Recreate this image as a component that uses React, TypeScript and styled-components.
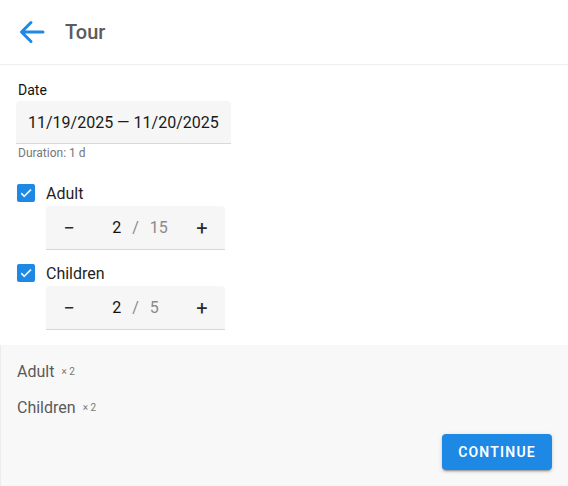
import * as React from 'react';
import styled, { createGlobalStyle } from 'styled-components';

const GlobalStyle = createGlobalStyle`
  html, body {
    margin: 0;
    padding: 0;
    background: #fff;
    font-family: Roboto, "Liberation Sans", sans-serif;
  }
`;

const Page = styled.div`
  width: 568px;
  height: 486px;
  display: flex;
  flex-direction: column;
  overflow: hidden;
`;

const Header = styled.header`
  height: 64px;
  flex: none;
  display: flex;
  align-items: center;
  gap: 19px;
  padding-left: 18px;
  border-bottom: 1px solid #eeeeee;
`;

const BackButton = styled.button`
  width: 28px;
  height: 28px;
  padding: 0;
  border: 0;
  background: none;
  display: flex;
  align-items: center;
  justify-content: center;
  color: #1e88e5;
  cursor: pointer;
`;

const Title = styled.h1`
  margin: 0;
  font-size: 20px;
  font-weight: 500;
  color: #5c5c5c;
`;

const Content = styled.main`
  flex: 1;
  padding: 15px 16px 0 16px;
  display: flex;
  flex-direction: column;
  align-items: flex-start;
`;

const FieldLabel = styled.label`
  font-size: 14px;
  line-height: 20px;
  font-weight: 400;
  color: #111;
  padding-left: 2px;
`;

const DateField = styled.div`
  margin-top: 1px;
  height: 43px;
  width: 215px;
  box-sizing: border-box;
  padding: 0 12px;
  display: flex;
  align-items: center;
  background: #f6f6f6;
  border-bottom: 1px solid #d8d8d8;
  border-radius: 4px 4px 0 0;
  font-size: 16px;
  color: #1a1a1a;
  white-space: nowrap;
`;

const Hint = styled.div`
  margin-top: 1px;
  padding-left: 2px;
  font-size: 12px;
  line-height: 16px;
  color: #777;
`;

const Group = styled.div<{ $first?: boolean }>`
  margin-top: ${(p) => (p.$first ? '20px' : '11px')};
  display: flex;
  flex-direction: column;
  align-items: flex-start;
`;

const CheckRow = styled.label`
  height: 24px;
  display: flex;
  align-items: center;
  gap: 11px;
  padding-left: 1px;
  font-size: 16px;
  color: #1f1f1f;
`;

const Box = styled.span`
  width: 18px;
  height: 18px;
  border-radius: 2px;
  background: #1e88e5;
  display: flex;
  align-items: center;
  justify-content: center;
`;

const Stepper = styled.div`
  margin: 1px 0 0 30px;
  width: 179px;
  height: 44px;
  box-sizing: border-box;
  display: grid;
  grid-template-columns: 46px 1fr 46px;
  align-items: center;
  background: #f6f6f6;
  border-bottom: 1px solid #d8d8d8;
  border-radius: 4px 4px 0 0;
`;

const StepButton = styled.button`
  height: 100%;
  border: 0;
  background: none;
  padding: 0;
  font-family: inherit;
  font-size: 20px;
  color: #2a2a2a;
  display: flex;
  align-items: center;
  justify-content: center;
`;

const Counter = styled.div`
  display: grid;
  grid-template-columns: 1fr auto 1fr;
  column-gap: 11px;
  align-items: center;
  font-size: 16px;
`;

const Value = styled.span`
  text-align: right;
  color: #111;
`;

const Slash = styled.span`
  color: #8a8a8a;
`;

const Max = styled.span`
  color: #8a8a8a;
`;

const Summary = styled.section`
  flex: none;
  height: 141px;
  box-sizing: border-box;
  background: #f8f8f8;
  border-left: 1px solid #ececec;
  padding: 8px 16px 0 16px;
  display: flex;
  flex-direction: column;
`;

const SummaryLine = styled.div`
  height: 36px;
  display: flex;
  align-items: center;
  gap: 7px;
  font-size: 16px;
  color: #5a5a5a;
`;

const Times = styled.span`
  font-size: 10px;
  color: #777;
`;

const Footer = styled.div`
  margin-top: 9px;
  display: flex;
  justify-content: flex-end;
`;

const ContinueButton = styled.button`
  width: 110px;
  height: 36px;
  border: 0;
  border-radius: 4px;
  background: #1e88e5;
  color: #fff;
  font-family: inherit;
  font-size: 14px;
  font-weight: 600;
  letter-spacing: 1.2px;
  box-shadow: 0 3px 1px -2px rgba(0, 0, 0, 0.2), 0 2px 2px 0 rgba(0, 0, 0, 0.14),
    0 1px 5px 0 rgba(0, 0, 0, 0.12);
`;

const BackArrow = () => (
  <svg width="28" height="28" viewBox="0 0 28 28" fill="none">
    <path
      d="M25 14H4.5M13 4.5L3.5 14l9.5 9.5"
      stroke="currentColor"
      strokeWidth="3"
      strokeLinecap="round"
      strokeLinejoin="round"
    />
  </svg>
);

const Check = () => (
  <svg width="14" height="14" viewBox="0 0 24 24">
    <path d="M9 16.2L4.8 12l-1.4 1.4L9 19 21 7l-1.4-1.4L9 16.2z" fill="#fff" stroke="#fff" strokeWidth="1" />
  </svg>
);

type Ticket = { name: string; count: number; max: number };

const tickets: Ticket[] = [
  { name: 'Adult', count: 2, max: 15 },
  { name: 'Children', count: 2, max: 5 },
];

export default function App() {
  return (
    <Page>
      <GlobalStyle />
      <Header>
        <BackButton aria-label="Back">
          <BackArrow />
        </BackButton>
        <Title>Tour</Title>
      </Header>
      <Content>
        <FieldLabel>Date</FieldLabel>
        <DateField>11/19/2025 — 11/20/2025</DateField>
        <Hint>Duration: 1 d</Hint>
        {tickets.map((t, i) => (
          <Group key={t.name} $first={i === 0}>
            <CheckRow>
              <Box>
                <Check />
              </Box>
              {t.name}
            </CheckRow>
            <Stepper>
              <StepButton>−</StepButton>
              <Counter>
                <Value>{t.count}</Value>
                <Slash>/</Slash>
                <Max>{t.max}</Max>
              </Counter>
              <StepButton>+</StepButton>
            </Stepper>
          </Group>
        ))}
      </Content>
      <Summary>
        {tickets.map((t) => (
          <SummaryLine key={t.name}>
            {t.name}
            <Times>× {t.count}</Times>
          </SummaryLine>
        ))}
        <Footer>
          <ContinueButton>CONTINUE</ContinueButton>
        </Footer>
      </Summary>
    </Page>
  );
}
